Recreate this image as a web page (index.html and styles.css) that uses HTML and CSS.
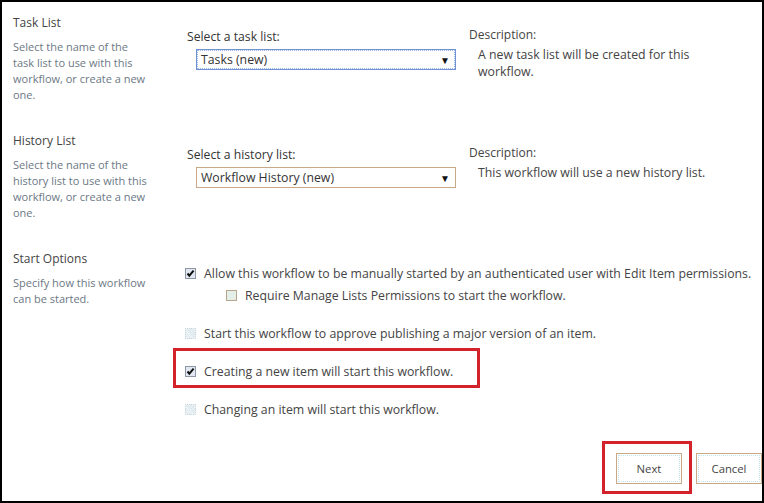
FILE: index.html
```html
<!DOCTYPE html>
<html lang="en">
<head>
<meta charset="utf-8">
<title>Workflow settings</title>
<link rel="stylesheet" href="styles.css">
</head>
<body>
<div class="frame">
  <section class="sec">
    <div class="info">
      <h3 class="info-title">Task List</h3>
      <p class="info-text">Select the name of the task list to use with this workflow, or create a new one.</p>
    </div>
    <div class="field">
      <div class="field-label">Select a task list:</div>
      <div class="select select-focus"><span class="select-value">Tasks (new)</span><span class="select-arrow">&#9660;</span></div>
    </div>
    <div class="desc">
      <div class="desc-title">Description:</div>
      <div class="desc-text">A new task list will be created for this workflow.</div>
    </div>
  </section>

  <section class="sec">
    <div class="info">
      <h3 class="info-title">History List</h3>
      <p class="info-text">Select the name of the history list to use with this workflow, or create a new one.</p>
    </div>
    <div class="field">
      <div class="field-label">Select a history list:</div>
      <div class="select"><span class="select-value">Workflow History (new)</span><span class="select-arrow">&#9660;</span></div>
    </div>
    <div class="desc">
      <div class="desc-title">Description:</div>
      <div class="desc-text">This workflow will use a new history list.</div>
    </div>
  </section>

  <section class="sec sec-start">
    <div class="info">
      <h3 class="info-title">Start Options</h3>
      <p class="info-text">Specify how this workflow can be started.</p>
    </div>
    <div class="options">
      <div class="opt-group">
        <div class="opt"><span class="cb cb-checked"><svg viewBox="0 0 11 11" width="11" height="11"><path d="M2.5 5.5 L4.3 7.6 L8.6 2.6" fill="none" stroke="#111" stroke-width="2"/></svg></span><span class="opt-text">Allow this workflow to be manually started by an authenticated user with Edit Item permissions.</span></div>
        <div class="opt opt-sub"><span class="cb"></span><span class="opt-text">Require Manage Lists Permissions to start the workflow.</span></div>
      </div>
      <div class="opt"><span class="cb cb-disabled"></span><span class="opt-text">Start this workflow to approve publishing a major version of an item.</span></div>
      <div class="opt opt-marked"><span class="mark mark-opt"></span><span class="cb cb-checked"><svg viewBox="0 0 11 11" width="11" height="11"><path d="M2.5 5.5 L4.3 7.6 L8.6 2.6" fill="none" stroke="#111" stroke-width="2"/></svg></span><span class="opt-text">Creating a new item will start this workflow.</span></div>
      <div class="opt"><span class="cb cb-disabled"></span><span class="opt-text">Changing an item will start this workflow.</span></div>
    </div>
  </section>

  <div class="actions">
    <button class="btn btn-next" type="button"><span class="mark mark-btn"></span>Next</button>
    <button class="btn" type="button">Cancel</button>
  </div>
</div>
</body>
</html>
```

FILE: styles.css
```css
* { box-sizing: border-box; }
html, body { margin: 0; padding: 0; background: #fff; }
body { font-family: "Open Sans", "Noto Sans", sans-serif; color: #444; }

.frame {
  width: 764px;
  height: 503px;
  border: 2px solid #000;
  background: #fff;
  overflow: hidden;
}

.sec {
  display: grid;
  grid-template-columns: 183px 284px 1fr;
  height: 118px;
}

.info { padding: 13px 0 0 11px; }
.info-title {
  margin: 0;
  font-size: 12px;
  line-height: 16px;
  font-weight: normal;
  color: #444;
}
.info-text {
  margin: 8px 0 0;
  width: 136px;
  font-size: 11px;
  line-height: 16px;
  color: #6c7885;
}

.field { padding: 27px 0 0 2px; }
.field-label { font-size: 12.2px; line-height: 16px; color: #333; }
.select {
  margin: 4px 0 0 9px;
  width: 260px;
  height: 21px;
  border: 1px solid #c8a886;
  display: flex;
  align-items: center;
  justify-content: space-between;
  padding: 0 5px 0 4px;
  font-size: 12.3px;
  color: #333;
}
.select-focus {
  border-color: #6f93d2;
  outline: 1px dotted #9bb6e6;
  outline-offset: -2px;
}
.select-arrow { font-size: 10px; line-height: 10px; color: #111; }

.desc { padding: 25px 0 0 0; }
.desc-title { font-size: 12px; line-height: 16px; color: #444; }
.desc-text {
  margin: 3px 0 0 9px;
  width: 240px;
  font-size: 12.3px;
  line-height: 17px;
  color: #444;
}

.sec-start { grid-template-columns: 183px 1fr; height: auto; }
.options {
  padding-top: 24px;
  display: flex;
  flex-direction: column;
  gap: 16px;
}
.opt {
  position: relative;
  display: flex;
  align-items: center;
  height: 22px;
  font-size: 12.3px;
  color: #444;
}
.opt-sub { padding-left: 41px; }
.cb {
  flex: none;
  width: 11px;
  height: 11px;
  margin-right: 8px;
  border: 1px solid #b9a58c;
  background: #e4efe8;
  display: flex;
}
.cb svg { margin: -1px; }
.cb-checked { border-color: #8d97a3; background: #e1e8f1; }
.cb-disabled {
  border: 1px dotted #c9d7de;
  background: repeating-linear-gradient(45deg, #eef4f6 0 1px, #dde9ee 1px 2px);
}

.mark {
  position: absolute;
  border: 3px solid #d3222b;
  pointer-events: none;
}
.mark-opt { left: -12px; top: -12px; width: 307px; height: 40px; }

.actions {
  display: flex;
  justify-content: flex-end;
  gap: 14px;
  padding-right: 0;
  margin-top: 33px;
}
.btn {
  position: relative;
  width: 66px;
  height: 31px;
  border: 1px solid #c8a886;
  background: #fff;
  font-family: "Open Sans", "Noto Sans", sans-serif;
  font-size: 11.3px;
  color: #444;
  padding: 0;
  outline: 1px dotted #bfe6ee;
  outline-offset: -3px;
}
.mark-btn { left: -15px; top: -13px; width: 90px; height: 53px; }
```
